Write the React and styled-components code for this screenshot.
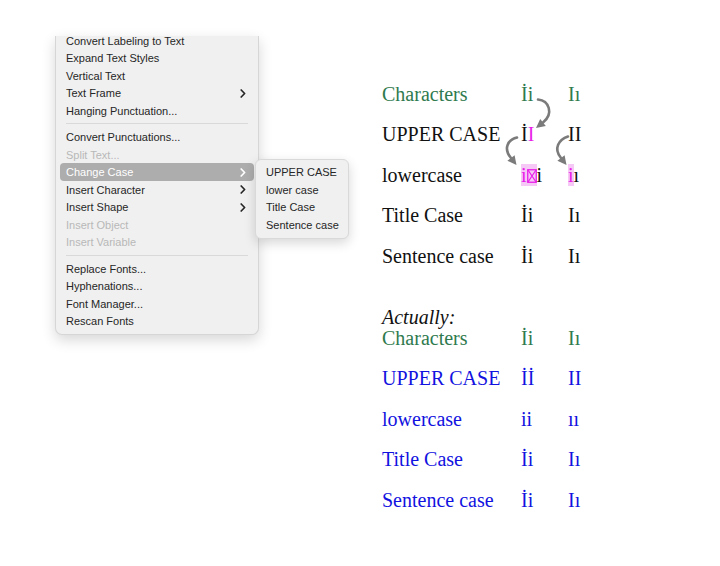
import React from 'react'
import styled, { createGlobalStyle } from 'styled-components'

const GlobalStyle = createGlobalStyle`
  html, body {
    margin: 0;
    padding: 0;
    background: #ffffff;
  }
`

const menuItems = [
  { label: 'Convert Labeling to Text' },
  { label: 'Expand Text Styles' },
  { label: 'Vertical Text' },
  { label: 'Text Frame', sub: true },
  { label: 'Hanging Punctuation...' },
  { sep: true },
  { label: 'Convert Punctuations...' },
  { label: 'Split Text...', disabled: true },
  { label: 'Change Case', sub: true, active: true },
  { label: 'Insert Character', sub: true },
  { label: 'Insert Shape', sub: true },
  { label: 'Insert Object', disabled: true },
  { label: 'Insert Variable', disabled: true },
  { sep: true },
  { label: 'Replace Fonts...' },
  { label: 'Hyphenations...' },
  { label: 'Font Manager...' },
  { label: 'Rescan Fonts' },
]

const caseItems = ['UPPER CASE', 'lower case', 'Title Case', 'Sentence case']

const GREEN = '#2f7a4e'
const BLUE = '#1212e0'
const MAGENTA = '#e81ee8'
const PINK = '#f6c8f6'

const Chevron = ({ color }) => (
  <svg width="6" height="9" viewBox="0 0 6 9">
    <path d="M1.2 1 L4.6 4.5 L1.2 8" fill="none" stroke={color} strokeWidth="1.7" strokeLinecap="round" strokeLinejoin="round" />
  </svg>
)

const NoGlyph = () => (
  <svg width="10" height="14" viewBox="0 0 10 14" style={{ verticalAlign: '-1px' }}>
    <rect x="0.75" y="0.75" width="8.5" height="12.5" fill="none" stroke={MAGENTA} strokeWidth="1.3" />
    <path d="M1 1 L9 13 M9 1 L1 13" stroke={MAGENTA} strokeWidth="1.2" />
  </svg>
)

const Arrow = ({ d, head }) => (
  <>
    <path d={d} fill="none" stroke="#7b7b7b" strokeWidth="2.6" strokeLinecap="round" />
    <polygon points={head} fill="#7b7b7b" />
  </>
)

const App = () => {
  return (
    <>
      <GlobalStyle />
      <Page>
        <Menu>
          <MenuList>
            {menuItems.map((item, i) =>
              item.sep ? (
                <Separator key={i} />
              ) : (
                <MenuRow key={i} $active={item.active} $disabled={item.disabled}>
                  <span>{item.label}</span>
                  {item.sub && <Chevron color={item.active ? '#ffffff' : '#262626'} />}
                  {item.active && (
                    <SubMenu>
                      {caseItems.map((c) => (
                        <SubRow key={c}>{c}</SubRow>
                      ))}
                    </SubMenu>
                  )}
                </MenuRow>
              )
            )}
          </MenuList>
        </Menu>

        <Sheet>
          <Block>
            <Arrows width="210" height="100" viewBox="382 83.5 210 100">
              <Arrow d="M538 99 C549 100, 554 113, 543 122" head="536,127.5 545.8,125.4 540.2,118.4" />
              <Arrow d="M517 137 C508 139, 503 148, 511 157.5" head="516.5,164.6 514.6,154.8 507.4,160.2" />
              <Arrow d="M568 136 C559 139, 553 148, 561 157.5" head="566.5,164.6 564.6,154.8 557.4,160.2" />
            </Arrows>
            <Row $tone={GREEN}>
              <span>Characters</span>
              <span>İi</span>
              <span>Iı</span>
            </Row>
            <Row>
              <span>UPPER CASE</span>
              <span>İ<Mark>I</Mark></span>
              <span>II</span>
            </Row>
            <Row>
              <span>lowercase</span>
              <span><Mark $bg><span>i</span><NoGlyph /></Mark>i</span>
              <span><Mark $bg>i</Mark>ı</span>
            </Row>
            <Row>
              <span>Title Case</span>
              <span>İi</span>
              <span>Iı</span>
            </Row>
            <Row>
              <span>Sentence case</span>
              <span>İi</span>
              <span>Iı</span>
            </Row>
          </Block>

          <Block $spaced>
            <div>
              <Caption>Actually:</Caption>
              <Row $tone={GREEN}>
                <span>Characters</span>
                <span>İi</span>
                <span>Iı</span>
              </Row>
            </div>
            <Row $tone={BLUE}>
              <span>UPPER CASE</span>
              <span>İİ</span>
              <span>II</span>
            </Row>
            <Row $tone={BLUE}>
              <span>lowercase</span>
              <span>ii</span>
              <span>ıı</span>
            </Row>
            <Row $tone={BLUE}>
              <span>Title Case</span>
              <span>İi</span>
              <span>Iı</span>
            </Row>
            <Row $tone={BLUE}>
              <span>Sentence case</span>
              <span>İi</span>
              <span>Iı</span>
            </Row>
          </Block>
        </Sheet>
      </Page>
    </>
  )
}

export default App

const Page = styled.div`
  display: flex;
  align-items: flex-start;
  width: 720px;
  height: 566px;
  overflow: hidden;
  background: #ffffff;
`

const Menu = styled.div`
  box-sizing: border-box;
  width: 204px;
  margin: 36px 0 0 55px;
  background: #f0f0f0;
  border: 1px solid #d6d6d6;
  border-top: none;
  border-radius: 0 0 7px 7px;
  box-shadow: 0 5px 14px rgba(0, 0, 0, 0.16);
  font-family: "Liberation Sans", Arial, sans-serif;
  font-size: 11px;
  color: #262626;
`

const MenuList = styled.div`
  margin-top: -4.25px;
  padding-bottom: 4px;
  display: flex;
  flex-direction: column;
`

const MenuRow = styled.div`
  position: relative;
  display: flex;
  align-items: center;
  justify-content: space-between;
  height: 17.5px;
  margin: 0 4px;
  padding: 0 8px 0 6px;
  border-radius: 4px;
  background: ${(p) => (p.$active ? '#adadad' : 'transparent')};
  color: ${(p) => (p.$active ? '#ffffff' : p.$disabled ? '#b8b8b8' : '#262626')};
`

const Separator = styled.div`
  height: 1px;
  margin: 4px 10px 4px 10px;
  background: #d9d9d9;
`

const SubMenu = styled.div`
  position: absolute;
  top: -4.25px;
  left: calc(100% + 1px);
  box-sizing: border-box;
  width: 94px;
  padding: 4px 5px;
  background: #f0f0f0;
  border: 1px solid #d9d9d9;
  border-radius: 6px;
  box-shadow: 0 4px 12px rgba(0, 0, 0, 0.16);
  z-index: 2;
`

const SubRow = styled.div`
  height: 17.5px;
  line-height: 17.5px;
  padding-left: 5px;
  color: #262626;
  white-space: nowrap;
`

const Sheet = styled.div`
  margin-left: 123px;
  padding-top: 83.5px;
  font-family: "Liberation Serif", "Times New Roman", serif;
  font-size: 20px;
  color: #111111;
`

const Block = styled.div`
  position: relative;
  display: flex;
  flex-direction: column;
  gap: 19.5px;
  margin-top: ${(p) => (p.$spaced ? '40px' : '0')};
`

const Row = styled.div`
  display: grid;
  grid-template-columns: 139px 47px auto;
  line-height: 21px;
  white-space: nowrap;
  color: ${(p) => p.$tone || '#111111'};
`

const Caption = styled.div`
  line-height: 21px;
  font-style: italic;
  color: #111111;
`

const Mark = styled.span`
  color: ${MAGENTA};
  background: ${(p) => (p.$bg ? PINK : 'transparent')};
`

const Arrows = styled.svg`
  position: absolute;
  left: 0;
  top: 0;
  overflow: visible;
  pointer-events: none;
`
